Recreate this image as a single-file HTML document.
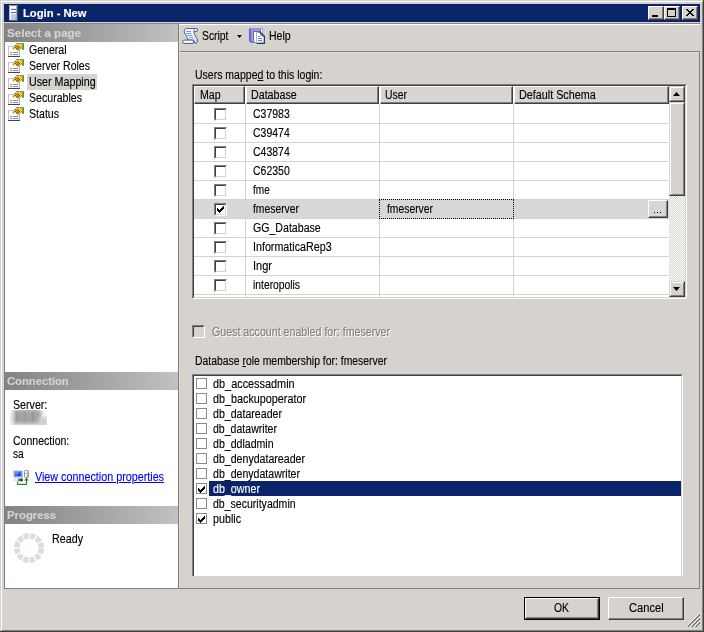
<!DOCTYPE html>
<html>
<head>
<meta charset="utf-8">
<title>Login - New</title>
<style>
html,body{margin:0;padding:0;}
body{width:704px;height:632px;overflow:hidden;background:#d6d3ce;position:relative;
 font-family:"Liberation Sans",sans-serif;font-size:12px;color:#000;line-height:14px;}
.a{position:absolute;}
.t{position:absolute;white-space:nowrap;height:14px;line-height:14px;font-size:12px;transform-origin:0 0;-webkit-text-stroke:0.14px currentColor;}
.tb{font-size:11px;font-weight:bold;}
.hl{position:absolute;height:1px;}
.vl{position:absolute;width:1px;}
/* 3D raised button */
.btn{position:absolute;background:#d6d3ce;box-sizing:border-box;
 border-top:1px solid #fff;border-left:1px solid #fff;border-right:1px solid #404040;border-bottom:1px solid #404040;}
.btn:after{content:"";position:absolute;left:0;top:0;right:0;bottom:0;border-right:1px solid #808080;border-bottom:1px solid #808080;}
.sb{border-top-color:#d6d3ce;border-left-color:#d6d3ce;}
.sb:after{border-top:1px solid #fff;border-left:1px solid #fff;}
/* grid header cell */
.hd{position:absolute;top:86px;height:18px;background:#dad5d1;box-sizing:border-box;
 border-top:1px solid #fff;border-left:1px solid #fff;border-right:1px solid #404040;border-bottom:1px solid #404040;}
.hd:after{content:"";position:absolute;left:0;top:0;right:0;bottom:0;border-right:1px solid #808080;border-bottom:1px solid #808080;}
.hd span{position:absolute;left:6px;top:2px;white-space:nowrap;}
/* 3D checkbox */
.cb{position:absolute;width:13px;height:13px;box-sizing:border-box;background:#fff;
 border-top:1px solid #808080;border-left:1px solid #808080;border-right:1px solid #fff;border-bottom:1px solid #fff;}
.cb:after{content:"";position:absolute;left:0;top:0;right:0;bottom:0;border-top:1px solid #404040;border-left:1px solid #404040;border-right:1px solid #d6d3ce;border-bottom:1px solid #d6d3ce;}
/* flat checkbox */
.fc{position:absolute;left:196px;width:11px;height:11px;box-sizing:border-box;border:1px solid #8a8a8a;background:#fff;}
.gl{position:absolute;left:194px;width:475px;height:1px;background:#d8d2cc;}
.gv{position:absolute;top:104px;width:1px;height:193px;background:#d8d2cc;}
.gt{position:absolute;left:253px;white-space:nowrap;}
.rt{position:absolute;left:214px;white-space:nowrap;}
.pi{position:absolute;left:8px;width:16px;height:16px;}
.pt{position:absolute;left:30px;white-space:nowrap;}
.ph{position:absolute;left:4px;width:174px;height:18px;background:linear-gradient(to right,#828282 0%,#c3c1c3 100%);color:#d6d3ce;font-weight:bold;font-size:11px;}
.ph span{position:absolute;left:4px;top:2px;white-space:nowrap;}
</style>
</head>
<body>
<!-- window frame -->
<div class="a" style="left:0;top:0;width:704px;height:632px;box-sizing:border-box;border-right:1px solid #404040;border-bottom:1px solid #404040;"></div>
<div class="a" style="left:1px;top:1px;width:702px;height:630px;box-sizing:border-box;border-top:1px solid #fff;border-left:1px solid #fff;border-right:1px solid #808080;border-bottom:1px solid #808080;"></div>

<!-- title bar -->
<div class="a" id="title" style="left:4px;top:4px;width:696px;height:18px;background:#0a246a;"></div>
<svg class="a" style="left:9px;top:5px" width="9" height="16" viewBox="0 0 9 16" shape-rendering="crispEdges">
 <rect x="0" y="0" width="9" height="16" fill="#8a8c98"/>
 <rect x="0" y="0" width="1" height="15" fill="#b4b6c0"/>
 <rect x="8" y="1" width="1" height="15" fill="#4c4e58"/>
 <rect x="1" y="1" width="7" height="14" fill="#ccd0f2"/>
 <rect x="1" y="1" width="7" height="2" fill="#ffffff"/>
 <rect x="2" y="3" width="6" height="1" fill="#dfe2f8"/>
 <rect x="2" y="4" width="6" height="1" fill="#687088"/>
 <rect x="1" y="5" width="7" height="2" fill="#ffffff"/>
 <rect x="2" y="7" width="6" height="1" fill="#586070"/>
 <rect x="1" y="8" width="7" height="1" fill="#ffffff"/>
 <rect x="1" y="3" width="1" height="12" fill="#ffffff"/>
 <rect x="2" y="9" width="5" height="6" fill="#c6caf0"/>
 <rect x="7" y="1" width="1" height="14" fill="#a2a6bc"/>
 <rect x="6" y="13" width="1" height="1" fill="#48d418"/>
 <rect x="0" y="15" width="9" height="1" fill="#5a5c66"/>
</svg>
<div class="t tb" style="left:23.45px;top:6px;color:#fff;transform:scaleX(1.0196);">Login - New</div>
<!-- caption buttons -->
<div class="btn" style="left:648px;top:6px;width:16px;height:14px;"></div>
<div class="a" style="left:652px;top:15px;width:6px;height:2px;background:#000;"></div>
<div class="btn" style="left:664px;top:6px;width:16px;height:14px;"></div>
<div class="a" style="left:667px;top:8px;width:9px;height:9px;box-sizing:border-box;border:1px solid #000;border-top-width:2px;"></div>
<div class="btn" style="left:682px;top:6px;width:16px;height:14px;"></div>
<svg class="a" style="left:686px;top:9px" width="8" height="7" viewBox="0 0 8 7" shape-rendering="crispEdges">
 <path d="M0 0h2v1h-2zM6 0h2v1h-2zM1 1h2v1h-2zM5 1h2v1h-2zM2 2h4v1h-4zM3 3h2v1h-2zM2 4h4v1h-4zM1 5h2v1h-2zM5 5h2v1h-2zM0 6h2v1h-2zM6 6h2v1h-2z" fill="#000"/></svg>

<!-- left panel -->
<div class="a" style="left:4px;top:24px;width:175px;height:565px;box-sizing:border-box;border:1px solid #808080;border-top:0;background:#fff;"></div>
<div class="ph" style="top:24px;"></div><div class="t tb" style="left:7.45px;top:26px;color:#d6d3ce;transform:scaleX(1.0542);">Select a page</div>
<div class="a" style="left:27px;top:74px;width:70px;height:16px;background:#d6d3ce;"></div>
<div class="t" style="left:29.45px;top:43px;color:#000;transform:scaleX(0.8804);">General</div>
<div class="t" style="left:29.45px;top:59px;color:#000;transform:scaleX(0.8795);">Server Roles</div>
<div class="t" style="left:29.45px;top:75px;color:#000;transform:scaleX(0.8916);">User Mapping</div>
<div class="t" style="left:29.45px;top:91px;color:#000;transform:scaleX(0.8828);">Securables</div>
<div class="t" style="left:29.45px;top:107px;color:#000;transform:scaleX(0.8818);">Status</div>
<svg width="0" height="0" style="position:absolute"><defs>
 <linearGradient id="hg" x1="0" y1="0" x2="1" y2="1"><stop offset="0" stop-color="#ffe468"/><stop offset="0.55" stop-color="#ffc020"/><stop offset="1" stop-color="#e88800"/></linearGradient>
 </defs></svg>
<svg class="pi" style="top:42px" viewBox="0 0 16 16"><g>
  <rect x="0" y="4" width="12" height="11" fill="#fff"/>
  <rect x="0" y="4" width="12" height="1" fill="#c2c2fc"/>
  <rect x="0" y="5" width="1" height="10" fill="#c4c4c8"/>
  <rect x="11" y="7" width="1" height="8" fill="#b4b4ea"/>
  <rect x="9" y="8" width="2" height="6" fill="#d4f0fc"/>
  <rect x="0" y="14" width="12" height="1" fill="#484848"/>
  <rect x="2" y="10" width="2" height="1" fill="#8080dc"/><rect x="5" y="10" width="5" height="1" fill="#8888dc"/>
  <rect x="2" y="12" width="2" height="1" fill="#8080dc"/><rect x="5" y="12" width="5" height="1" fill="#8888dc"/>
  <path d="M8.5 1.6 L14.6 1.6 L14.8 6.4 L12 7.4 L9.6 9.2 L7.8 7 L5.6 7.6 L4.2 6.6 L6.8 3.2 Z" fill="url(#hg)"/>
  <rect x="8" y="1" width="8" height="1" fill="#8c8c84"/>
  <path d="M4.2 6.6 L6.8 3.6 L7.6 4.4 L5.4 7.4 Z" fill="#c89838" opacity="0.8"/>
  <g fill="#5c4c28"><rect x="7" y="3" width="1" height="1"/><rect x="9" y="3" width="1" height="1"/><rect x="8" y="4" width="1" height="1"/><rect x="10" y="4" width="1" height="1"/><rect x="7" y="5" width="1" height="1"/><rect x="9" y="5" width="1" height="1"/><rect x="11" y="5" width="1" height="1"/><rect x="8" y="6" width="1" height="1"/><rect x="10" y="6" width="1" height="1"/><rect x="9" y="7" width="1" height="1"/></g>
  <rect x="15" y="2" width="1" height="6" fill="#28b438"/>
  <rect x="14.5" y="2" width="0.5" height="6" fill="#187828"/>
</g></svg>
<svg class="pi" style="top:58px" viewBox="0 0 16 16"><g>
  <rect x="0" y="4" width="12" height="11" fill="#fff"/>
  <rect x="0" y="4" width="12" height="1" fill="#c2c2fc"/>
  <rect x="0" y="5" width="1" height="10" fill="#c4c4c8"/>
  <rect x="11" y="7" width="1" height="8" fill="#b4b4ea"/>
  <rect x="9" y="8" width="2" height="6" fill="#d4f0fc"/>
  <rect x="0" y="14" width="12" height="1" fill="#484848"/>
  <rect x="2" y="10" width="2" height="1" fill="#8080dc"/><rect x="5" y="10" width="5" height="1" fill="#8888dc"/>
  <rect x="2" y="12" width="2" height="1" fill="#8080dc"/><rect x="5" y="12" width="5" height="1" fill="#8888dc"/>
  <path d="M8.5 1.6 L14.6 1.6 L14.8 6.4 L12 7.4 L9.6 9.2 L7.8 7 L5.6 7.6 L4.2 6.6 L6.8 3.2 Z" fill="url(#hg)"/>
  <rect x="8" y="1" width="8" height="1" fill="#8c8c84"/>
  <path d="M4.2 6.6 L6.8 3.6 L7.6 4.4 L5.4 7.4 Z" fill="#c89838" opacity="0.8"/>
  <g fill="#5c4c28"><rect x="7" y="3" width="1" height="1"/><rect x="9" y="3" width="1" height="1"/><rect x="8" y="4" width="1" height="1"/><rect x="10" y="4" width="1" height="1"/><rect x="7" y="5" width="1" height="1"/><rect x="9" y="5" width="1" height="1"/><rect x="11" y="5" width="1" height="1"/><rect x="8" y="6" width="1" height="1"/><rect x="10" y="6" width="1" height="1"/><rect x="9" y="7" width="1" height="1"/></g>
  <rect x="15" y="2" width="1" height="6" fill="#28b438"/>
  <rect x="14.5" y="2" width="0.5" height="6" fill="#187828"/>
</g></svg>
<svg class="pi" style="top:74px" viewBox="0 0 16 16"><g>
  <rect x="0" y="4" width="12" height="11" fill="#fff"/>
  <rect x="0" y="4" width="12" height="1" fill="#c2c2fc"/>
  <rect x="0" y="5" width="1" height="10" fill="#c4c4c8"/>
  <rect x="11" y="7" width="1" height="8" fill="#b4b4ea"/>
  <rect x="9" y="8" width="2" height="6" fill="#d4f0fc"/>
  <rect x="0" y="14" width="12" height="1" fill="#484848"/>
  <rect x="2" y="10" width="2" height="1" fill="#8080dc"/><rect x="5" y="10" width="5" height="1" fill="#8888dc"/>
  <rect x="2" y="12" width="2" height="1" fill="#8080dc"/><rect x="5" y="12" width="5" height="1" fill="#8888dc"/>
  <path d="M8.5 1.6 L14.6 1.6 L14.8 6.4 L12 7.4 L9.6 9.2 L7.8 7 L5.6 7.6 L4.2 6.6 L6.8 3.2 Z" fill="url(#hg)"/>
  <rect x="8" y="1" width="8" height="1" fill="#8c8c84"/>
  <path d="M4.2 6.6 L6.8 3.6 L7.6 4.4 L5.4 7.4 Z" fill="#c89838" opacity="0.8"/>
  <g fill="#5c4c28"><rect x="7" y="3" width="1" height="1"/><rect x="9" y="3" width="1" height="1"/><rect x="8" y="4" width="1" height="1"/><rect x="10" y="4" width="1" height="1"/><rect x="7" y="5" width="1" height="1"/><rect x="9" y="5" width="1" height="1"/><rect x="11" y="5" width="1" height="1"/><rect x="8" y="6" width="1" height="1"/><rect x="10" y="6" width="1" height="1"/><rect x="9" y="7" width="1" height="1"/></g>
  <rect x="15" y="2" width="1" height="6" fill="#28b438"/>
  <rect x="14.5" y="2" width="0.5" height="6" fill="#187828"/>
</g></svg>
<svg class="pi" style="top:90px" viewBox="0 0 16 16"><g>
  <rect x="0" y="4" width="12" height="11" fill="#fff"/>
  <rect x="0" y="4" width="12" height="1" fill="#c2c2fc"/>
  <rect x="0" y="5" width="1" height="10" fill="#c4c4c8"/>
  <rect x="11" y="7" width="1" height="8" fill="#b4b4ea"/>
  <rect x="9" y="8" width="2" height="6" fill="#d4f0fc"/>
  <rect x="0" y="14" width="12" height="1" fill="#484848"/>
  <rect x="2" y="10" width="2" height="1" fill="#8080dc"/><rect x="5" y="10" width="5" height="1" fill="#8888dc"/>
  <rect x="2" y="12" width="2" height="1" fill="#8080dc"/><rect x="5" y="12" width="5" height="1" fill="#8888dc"/>
  <path d="M8.5 1.6 L14.6 1.6 L14.8 6.4 L12 7.4 L9.6 9.2 L7.8 7 L5.6 7.6 L4.2 6.6 L6.8 3.2 Z" fill="url(#hg)"/>
  <rect x="8" y="1" width="8" height="1" fill="#8c8c84"/>
  <path d="M4.2 6.6 L6.8 3.6 L7.6 4.4 L5.4 7.4 Z" fill="#c89838" opacity="0.8"/>
  <g fill="#5c4c28"><rect x="7" y="3" width="1" height="1"/><rect x="9" y="3" width="1" height="1"/><rect x="8" y="4" width="1" height="1"/><rect x="10" y="4" width="1" height="1"/><rect x="7" y="5" width="1" height="1"/><rect x="9" y="5" width="1" height="1"/><rect x="11" y="5" width="1" height="1"/><rect x="8" y="6" width="1" height="1"/><rect x="10" y="6" width="1" height="1"/><rect x="9" y="7" width="1" height="1"/></g>
  <rect x="15" y="2" width="1" height="6" fill="#28b438"/>
  <rect x="14.5" y="2" width="0.5" height="6" fill="#187828"/>
</g></svg>
<svg class="pi" style="top:106px" viewBox="0 0 16 16"><g>
  <rect x="0" y="4" width="12" height="11" fill="#fff"/>
  <rect x="0" y="4" width="12" height="1" fill="#c2c2fc"/>
  <rect x="0" y="5" width="1" height="10" fill="#c4c4c8"/>
  <rect x="11" y="7" width="1" height="8" fill="#b4b4ea"/>
  <rect x="9" y="8" width="2" height="6" fill="#d4f0fc"/>
  <rect x="0" y="14" width="12" height="1" fill="#484848"/>
  <rect x="2" y="10" width="2" height="1" fill="#8080dc"/><rect x="5" y="10" width="5" height="1" fill="#8888dc"/>
  <rect x="2" y="12" width="2" height="1" fill="#8080dc"/><rect x="5" y="12" width="5" height="1" fill="#8888dc"/>
  <path d="M8.5 1.6 L14.6 1.6 L14.8 6.4 L12 7.4 L9.6 9.2 L7.8 7 L5.6 7.6 L4.2 6.6 L6.8 3.2 Z" fill="url(#hg)"/>
  <rect x="8" y="1" width="8" height="1" fill="#8c8c84"/>
  <path d="M4.2 6.6 L6.8 3.6 L7.6 4.4 L5.4 7.4 Z" fill="#c89838" opacity="0.8"/>
  <g fill="#5c4c28"><rect x="7" y="3" width="1" height="1"/><rect x="9" y="3" width="1" height="1"/><rect x="8" y="4" width="1" height="1"/><rect x="10" y="4" width="1" height="1"/><rect x="7" y="5" width="1" height="1"/><rect x="9" y="5" width="1" height="1"/><rect x="11" y="5" width="1" height="1"/><rect x="8" y="6" width="1" height="1"/><rect x="10" y="6" width="1" height="1"/><rect x="9" y="7" width="1" height="1"/></g>
  <rect x="15" y="2" width="1" height="6" fill="#28b438"/>
  <rect x="14.5" y="2" width="0.5" height="6" fill="#187828"/>
</g></svg>

<div class="ph" style="top:372px;"></div><div class="t tb" style="left:7.45px;top:374px;color:#d6d3ce;transform:scaleX(1.0201);">Connection</div>
<div class="t" style="left:13.45px;top:398px;color:#000;transform:scaleX(0.8867);">Server:</div>
<div class="a" style="left:10px;top:410px;width:37px;height:15px;overflow:hidden;background:#f7f7f7;">
 <div class="a" style="left:3px;top:-1px;width:27px;height:16px;background:#b2b2b2;filter:blur(2.2px);"></div>
 <div class="a" style="left:6px;top:1px;width:2px;height:11px;background:#8a8a8a;filter:blur(1px);box-shadow:4px 0 1px #969696,8px 0 1px #8a8a8a,12px 0 1px #9a9a9a,16px 0 1px #868686,20px 0 1px #9a9a9a,23px 0 1px #a2a2a2;"></div>
 <div class="a" style="left:29px;top:7px;width:9px;height:9px;background:#cfcfcf;filter:blur(1.8px);"></div>
</div>
<div class="t" style="left:13.45px;top:434px;color:#000;transform:scaleX(0.8790);">Connection:</div>
<div class="t" style="left:13.45px;top:447px;color:#000;transform:scaleX(0.8462);">sa</div>
<svg class="a" style="left:13px;top:470px" width="16" height="15" viewBox="0 0 16 15">
 <rect x="0" y="0" width="9.5" height="8" rx="1" fill="#d4d4de"/>
 <rect x="8.5" y="1" width="1" height="7" fill="#8c8cb8"/>
 <rect x="1.5" y="1.5" width="6.8" height="5" fill="#2868f4"/>
 <rect x="2" y="2" width="3" height="2" fill="#5a90ff"/>
 <rect x="5" y="4" width="3" height="2" fill="#1450e0"/>
 <rect x="0.3" y="8.6" width="9.4" height="2.6" rx="0.8" fill="#e4e4ec"/>
 <rect x="5" y="8.6" width="4.7" height="2.6" rx="0.8" fill="#6468b0"/>
 <rect x="7.5" y="9" width="2.2" height="2.2" rx="0.6" fill="#20207c"/>
 <rect x="11.5" y="0.5" width="4" height="7" rx="0.8" fill="#fcfcff" stroke="#9090a0" stroke-width="1"/>
 <rect x="14.2" y="1" width="1.2" height="6" fill="#a8a8d8"/>
 <rect x="12" y="3" width="3" height="0.8" fill="#a0a0a8"/>
 <rect x="13.6" y="5.6" width="1.2" height="1.2" fill="#40d020"/>
 <path d="M4.5 11.4 V14.4 H13.5 V8.6" stroke="#249410" stroke-width="1.2" fill="none"/>
 <path d="M11 10.6 L13.5 7.8 L16 10.6 Z" fill="#249410"/>
</svg>
<div class="t" style="left:35.45px;top:470px;color:#0000ff;transform:scaleX(0.8967);text-decoration:underline;">View connection properties</div>
<div class="ph" style="top:506px;"></div><div class="t tb" style="left:7.45px;top:508px;color:#d6d3ce;transform:scaleX(1.0300);">Progress</div>
<svg class="a" style="left:13px;top:532px" width="32" height="32" viewBox="0 0 32 32">
 <circle cx="16" cy="16" r="12.2" fill="none" stroke="#dfdbdf" stroke-width="5.7" stroke-dasharray="5.05 1.338" transform="rotate(3.1 16 16)"/>
</svg>
<div class="t" style="left:52.45px;top:532px;color:#000;transform:scaleX(0.8937);">Ready</div>

<!-- right pane frame -->
<div class="hl" style="left:179px;top:24px;width:521px;background:#fff;"></div>
<div class="hl" style="left:4px;top:23px;width:696px;background:#868686;"></div>
<div class="vl" style="left:179px;top:25px;height:563px;background:#dcd9d3;"></div>
<div class="hl" style="left:180px;top:51px;width:520px;background:#808080;"></div>
<div class="hl" style="left:180px;top:52px;width:519px;background:#e4e0dc;"></div>
<div class="vl" style="left:699px;top:51px;height:538px;background:#808080;"></div>
<div class="hl" style="left:4px;top:588px;width:696px;background:#808080;"></div>

<!-- toolbar -->
<svg class="a" style="left:182px;top:28px" width="16" height="16" viewBox="0 0 16 16">
 <defs><linearGradient id="sg" x1="0" y1="0" x2="1" y2="1"><stop offset="0.2" stop-color="#ffffff"/><stop offset="1" stop-color="#c4d0f6"/></linearGradient></defs>
 <path d="M4.5 0.5 H14 Q16 0.7 15.8 2.1 Q15.6 3.6 14 3.6 H12 Q11.8 5.6 13.5 8 Q15.9 10.8 15.6 13 Q15.2 15.2 13 15.5 L11.5 12 H5.8 Q5.4 9.5 4 7.5 Q2 5 2.2 3 Q2.5 0.8 4.5 0.5 Z" fill="url(#sg)" stroke="#4c6486" stroke-width="1"/>
 <path d="M12 3.6 Q11.2 2 12.6 1.4" fill="none" stroke="#4c6486" stroke-width="0.9"/>
 <rect x="0.5" y="12.1" width="11.2" height="3.4" rx="1.7" fill="#e4eaff" stroke="#4c6486" stroke-width="1"/>
 <rect x="1.6" y="13" width="9" height="1.2" fill="#ffffff"/>
 <rect x="4" y="3" width="5" height="1" fill="#6a92ec"/>
 <rect x="4" y="5" width="5" height="1" fill="#6a92ec"/>
 <rect x="5" y="7" width="5" height="1" fill="#7a9cec"/>
 <rect x="7" y="9" width="4" height="1" fill="#8aa8f0"/>
</svg>
<div class="t" style="left:202.45px;top:29px;color:#000;transform:scaleX(0.8615);">Script</div>
<svg class="a" style="left:237px;top:35px" width="5" height="3" viewBox="0 0 5 3"><path d="M0 0 H5 L2.5 3 Z" fill="#000"/></svg>
<svg class="a" style="left:249px;top:28px" width="16" height="16" viewBox="0 0 16 16">
 <defs><linearGradient id="pg2" x1="0" y1="0" x2="1" y2="1"><stop offset="0.4" stop-color="#ffffff"/><stop offset="1" stop-color="#c8d8f4"/></linearGradient></defs>
 <path d="M0 0 H13.5 V6 H10 V14 Q10 14.5 9 14.5 H2 Q0 14.5 0 12.5 Z" fill="#7474d4"/>
 <rect x="0" y="0" width="13.5" height="1" fill="#9090e8"/>
 <rect x="0" y="1" width="1" height="12" fill="#6060c0"/>
 <rect x="2.5" y="1" width="2" height="12.5" fill="#a4a4f4"/>
 <rect x="5" y="1" width="6" height="2" fill="#9a9aee"/>
 <rect x="12" y="1" width="1" height="5" fill="#ffffff"/>
 <rect x="1" y="13.5" width="8" height="1" fill="#5c5cb0"/>
 <rect x="4" y="3" width="6" height="11" fill="#ffffff"/>
 <rect x="4" y="3" width="1" height="11" fill="#587888"/>
 <rect x="4" y="3" width="7" height="1" fill="#587888"/>
 <path d="M7.5 4.5 H10.8 L15.5 8.8 V15.5 H7.5 Z" fill="url(#pg2)" stroke="#a4b4c4" stroke-width="1"/>
 <path d="M10.6 3.7 L15.5 8.4 V15.5 H7.8" fill="none" stroke="#203a5c" stroke-width="1.3"/>
 <path d="M11.4 5 L12 7.6 L14.6 8.2 Z" fill="#ffffff" stroke="#203a5c" stroke-width="0.7"/>
 <rect x="9" y="8" width="2" height="1" fill="#6484c4"/>
 <rect x="9" y="10" width="4" height="1" fill="#6484c4"/>
 <rect x="9" y="12" width="4" height="1" fill="#6484c4"/>
</svg>
<div class="t" style="left:269.45px;top:29px;color:#000;transform:scaleX(0.8798);">Help</div>

<!-- users mapped grid -->
<div class="t" style="left:195.45px;top:68px;color:#000;transform:scaleX(0.8754);">Users mappe<u>d</u> to this login:</div>
<div class="a" style="left:192px;top:84px;width:495px;height:215px;box-sizing:border-box;background:#fff;
 border-top:1px solid #808080;border-left:1px solid #808080;border-right:1px solid #fff;border-bottom:1px solid #fff;"></div>
<div class="a" style="left:193px;top:85px;width:493px;height:213px;box-sizing:border-box;
 border-top:1px solid #404040;border-left:1px solid #404040;border-right:1px solid #d6d3ce;border-bottom:1px solid #d6d3ce;"></div>
<!-- selected row -->
<div class="a" style="left:194px;top:200px;width:475px;height:18px;background:#d9d7db;"></div>
<!-- grid lines -->
<div class="gl" style="top:123px"></div><div class="gl" style="top:142px"></div><div class="gl" style="top:161px"></div>
<div class="gl" style="top:180px"></div><div class="gl" style="top:199px"></div><div class="gl" style="top:218px"></div>
<div class="gl" style="top:237px"></div><div class="gl" style="top:256px"></div><div class="gl" style="top:275px"></div>
<div class="gl" style="top:294px"></div>
<div class="gv" style="left:245px"></div><div class="gv" style="left:379px"></div><div class="gv" style="left:513px"></div>
<!-- header -->
<div class="hd" style="left:194px;width:51px;"></div><div class="t" style="left:200.45px;top:88px;color:#000;transform:scaleX(0.8872);">Map</div>
<div class="hd" style="left:246px;width:133px;"></div><div class="t" style="left:251.45px;top:88px;color:#000;transform:scaleX(0.8898);">Database</div>
<div class="hd" style="left:380px;width:133px;"></div><div class="t" style="left:385.45px;top:88px;color:#000;transform:scaleX(0.8682);">User</div>
<div class="hd" style="left:514px;width:155px;"></div><div class="t" style="left:519.45px;top:88px;color:#000;transform:scaleX(0.8985);">Default Schema</div>
<!-- rows -->
<div class="cb" style="left:214px;top:108px"></div><div class="t" style="left:253.45px;top:107px;color:#000;transform:scaleX(0.8734);">C37983</div>
<div class="cb" style="left:214px;top:127px"></div><div class="t" style="left:253.45px;top:126px;color:#000;transform:scaleX(0.8734);">C39474</div>
<div class="cb" style="left:214px;top:146px"></div><div class="t" style="left:253.45px;top:145px;color:#000;transform:scaleX(0.8734);">C43874</div>
<div class="cb" style="left:214px;top:165px"></div><div class="t" style="left:253.45px;top:164px;color:#000;transform:scaleX(0.8734);">C62350</div>
<div class="cb" style="left:214px;top:184px"></div><div class="t" style="left:253.45px;top:183px;color:#000;transform:scaleX(0.8362);">fme</div>
<div class="cb" style="left:214px;top:203px"></div><div class="t" style="left:253.45px;top:202px;color:#000;transform:scaleX(0.8623);">fmeserver</div>
<svg class="a" style="left:217px;top:206px" width="7" height="7" viewBox="0 0 7 7" shape-rendering="crispEdges"><path d="M0 2h1v3h-1zM1 3h1v3h-1zM2 4h1v3h-1zM3 3h1v3h-1zM4 2h1v3h-1zM5 1h1v3h-1zM6 0h1v3h-1z" fill="#000"/></svg>
<div class="t" style="left:387.45px;top:202px;color:#000;transform:scaleX(0.8623);">fmeserver</div>
<div class="cb" style="left:214px;top:222px"></div><div class="t" style="left:253.45px;top:221px;color:#000;transform:scaleX(0.8827);">GG_Database</div>
<div class="cb" style="left:214px;top:241px"></div><div class="t" style="left:252.56px;top:240px;color:#000;transform:scaleX(0.8928);">InformaticaRep3</div>
<div class="cb" style="left:214px;top:260px"></div><div class="t" style="left:252.54px;top:259px;color:#000;transform:scaleX(0.9146);">Ingr</div>
<div class="cb" style="left:214px;top:279px"></div><div class="t" style="left:253.45px;top:278px;color:#000;transform:scaleX(0.8593);">interopolis</div>
<!-- focus rect -->
<div class="a" style="left:379px;top:199px;width:135px;height:20px;box-sizing:border-box;border:1px dotted #000;"></div>
<!-- ellipsis button -->
<div class="btn" style="left:648px;top:200px;width:20px;height:18px;background:#dad5d1;"></div>
<div class="a" style="left:654px;top:212px;width:1px;height:1px;background:#000;box-shadow:3px 0 0 #000,6px 0 0 #000;"></div>
<!-- scrollbar -->
<div class="a" style="left:669px;top:86px;width:16px;height:211px;background:repeating-conic-gradient(#ffffff 0% 25%, #d6d3ce 0% 50%) 0 0/2px 2px;"></div>
<div class="btn sb" style="left:669px;top:86px;width:16px;height:16px;"></div>
<svg class="a" style="left:673px;top:92px" width="7" height="4" viewBox="0 0 7 4"><path d="M0 4 H7 L3.5 0 Z" fill="#000"/></svg>
<div class="btn sb" style="left:669px;top:102px;width:16px;height:94px;"></div>
<div class="btn sb" style="left:669px;top:281px;width:16px;height:16px;"></div>
<svg class="a" style="left:673px;top:287px" width="7" height="4" viewBox="0 0 7 4"><path d="M0 0 H7 L3.5 4 Z" fill="#000"/></svg>

<!-- guest checkbox -->
<div class="cb" style="left:192px;top:325px;background:#d6d3ce;"></div>
<div class="t" style="left:213.45px;top:326px;color:#fff;transform:scaleX(0.8866);">Guest account enabled for: fmeserver</div>
<div class="t" style="left:212.45px;top:325px;color:#808080;transform:scaleX(0.8866);">Guest account enabled for: fmeserver</div>

<!-- role list -->
<div class="t" style="left:195.45px;top:354px;color:#000;transform:scaleX(0.8671);">Database <u>r</u>ole membership for: fmeserver</div>
<div class="a" style="left:192px;top:374px;width:491px;height:202px;box-sizing:border-box;background:#fff;
 border-top:1px solid #808080;border-left:1px solid #808080;border-right:1px solid #fff;"></div>
<div class="a" style="left:193px;top:375px;width:489px;height:201px;box-sizing:border-box;
 border-top:1px solid #404040;border-left:1px solid #404040;border-right:1px solid #d6d3ce;"></div>
<div class="a" style="left:209px;top:481px;width:472px;height:15px;background:#0a246a;"></div>
<div class="fc" style="top:378px"></div><div class="t" style="left:213.45px;top:377px;color:#000;transform:scaleX(0.9063);">db_accessadmin</div>
<div class="fc" style="top:393px"></div><div class="t" style="left:213.45px;top:392px;color:#000;transform:scaleX(0.8993);">db_backupoperator</div>
<div class="fc" style="top:408px"></div><div class="t" style="left:213.45px;top:407px;color:#000;transform:scaleX(0.8838);">db_datareader</div>
<div class="fc" style="top:423px"></div><div class="t" style="left:213.45px;top:422px;color:#000;transform:scaleX(0.8802);">db_datawriter</div>
<div class="fc" style="top:438px"></div><div class="t" style="left:213.45px;top:437px;color:#000;transform:scaleX(0.8818);">db_ddladmin</div>
<div class="fc" style="top:453px"></div><div class="t" style="left:213.45px;top:452px;color:#000;transform:scaleX(0.8839);">db_denydatareader</div>
<div class="fc" style="top:468px"></div><div class="t" style="left:213.45px;top:467px;color:#000;transform:scaleX(0.8812);">db_denydatawriter</div>
<div class="fc" style="top:483px"></div><div class="t" style="left:213.45px;top:482px;color:#fff;transform:scaleX(0.8917);">db_owner</div>
<svg class="a" style="left:198px;top:486px" width="7" height="7" viewBox="0 0 7 7" shape-rendering="crispEdges"><path d="M0 2h1v3h-1zM1 3h1v3h-1zM2 4h1v3h-1zM3 3h1v3h-1zM4 2h1v3h-1zM5 1h1v3h-1zM6 0h1v3h-1z" fill="#000"/></svg>
<div class="fc" style="top:498px"></div><div class="t" style="left:213.45px;top:497px;color:#000;transform:scaleX(0.8782);">db_securityadmin</div>
<div class="fc" style="top:513px"></div><div class="t" style="left:213.45px;top:512px;color:#000;transform:scaleX(0.8930);">public</div>
<svg class="a" style="left:198px;top:516px" width="7" height="7" viewBox="0 0 7 7" shape-rendering="crispEdges"><path d="M0 2h1v3h-1zM1 3h1v3h-1zM2 4h1v3h-1zM3 3h1v3h-1zM4 2h1v3h-1zM5 1h1v3h-1zM6 0h1v3h-1z" fill="#000"/></svg>

<!-- buttons -->
<div class="a" style="left:524px;top:597px;width:76px;height:23px;background:#000;"></div>
<div class="btn" style="left:525px;top:598px;width:74px;height:21px;"></div>
<div class="t" style="left:554.45px;top:601px;color:#000;transform:scaleX(0.8654);">OK</div>
<div class="btn" style="left:608px;top:597px;width:76px;height:23px;"></div>
<div class="t" style="left:629.45px;top:601px;color:#000;transform:scaleX(0.9267);">Cancel</div>
<!-- grip -->
<svg class="a" style="left:686px;top:613px" width="14" height="14" viewBox="0 0 14 14" shape-rendering="crispEdges">
 <path d="M13 0h1v1h-1zM12 1h1v1h-1zM11 2h1v1h-1zM10 3h1v1h-1zM9 4h1v1h-1zM13 4h1v1h-1zM8 5h1v1h-1zM12 5h1v1h-1zM7 6h1v1h-1zM11 6h1v1h-1zM6 7h1v1h-1zM10 7h1v1h-1zM5 8h1v1h-1zM9 8h1v1h-1zM13 8h1v1h-1zM4 9h1v1h-1zM8 9h1v1h-1zM12 9h1v1h-1zM3 10h1v1h-1zM7 10h1v1h-1zM11 10h1v1h-1zM2 11h1v1h-1zM6 11h1v1h-1zM10 11h1v1h-1zM1 12h1v1h-1zM5 12h1v1h-1zM9 12h1v1h-1zM0 13h1v1h-1zM4 13h1v1h-1zM8 13h1v1h-1z" fill="#ffffff"/>
 <path d="M13 1h1v1h-1zM12 2h1v1h-1zM13 2h1v1h-1zM11 3h1v1h-1zM12 3h1v1h-1zM10 4h1v1h-1zM11 4h1v1h-1zM9 5h1v1h-1zM10 5h1v1h-1zM13 5h1v1h-1zM8 6h1v1h-1zM9 6h1v1h-1zM12 6h1v1h-1zM13 6h1v1h-1zM7 7h1v1h-1zM8 7h1v1h-1zM11 7h1v1h-1zM12 7h1v1h-1zM6 8h1v1h-1zM7 8h1v1h-1zM10 8h1v1h-1zM11 8h1v1h-1zM5 9h1v1h-1zM6 9h1v1h-1zM9 9h1v1h-1zM10 9h1v1h-1zM13 9h1v1h-1zM4 10h1v1h-1zM5 10h1v1h-1zM8 10h1v1h-1zM9 10h1v1h-1zM12 10h1v1h-1zM13 10h1v1h-1zM3 11h1v1h-1zM4 11h1v1h-1zM7 11h1v1h-1zM8 11h1v1h-1zM11 11h1v1h-1zM12 11h1v1h-1zM2 12h1v1h-1zM3 12h1v1h-1zM6 12h1v1h-1zM7 12h1v1h-1zM10 12h1v1h-1zM11 12h1v1h-1zM1 13h1v1h-1zM2 13h1v1h-1zM5 13h1v1h-1zM6 13h1v1h-1zM9 13h1v1h-1zM10 13h1v1h-1z" fill="#7c7c7c"/>
</svg>
</body>
</html>
